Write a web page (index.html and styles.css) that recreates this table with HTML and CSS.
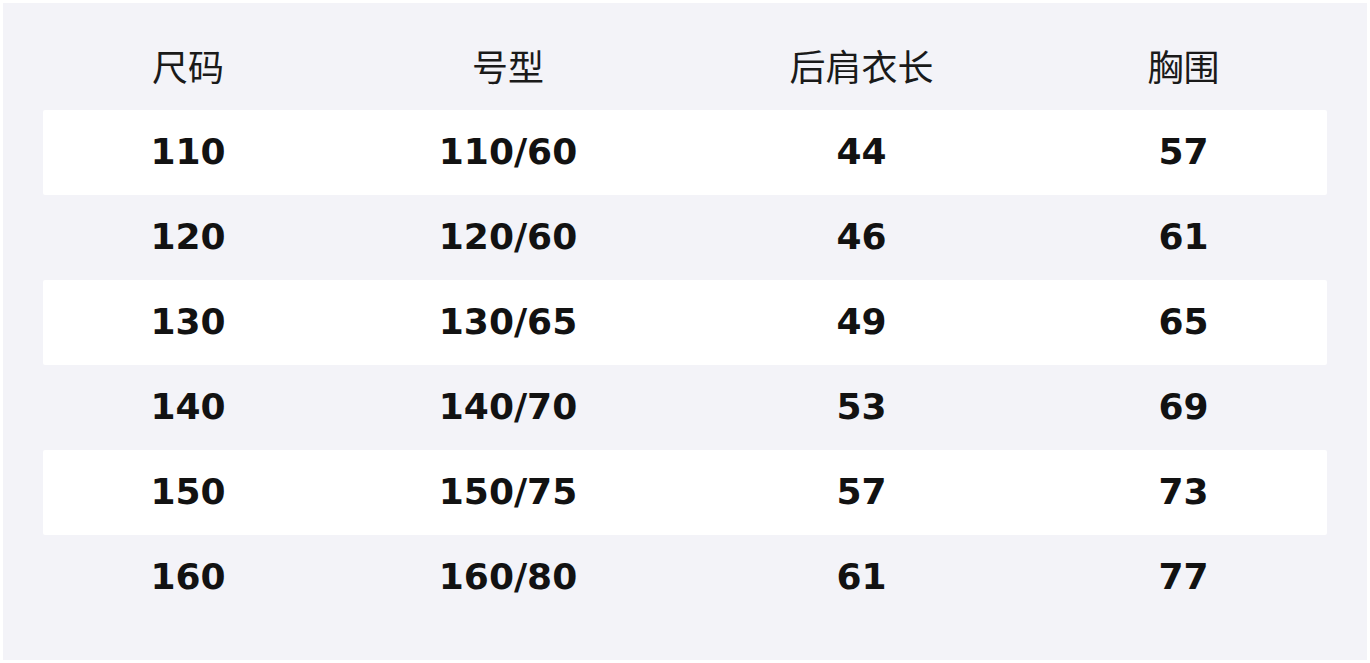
FILE: index.html
```html
<!DOCTYPE html>
<html lang="zh">
<head>
<meta charset="utf-8">
<link rel="stylesheet" href="styles.css">
</head>
<body>
<div class="panel">
  <div class="table">
    <div class="row head"><div>尺码</div><div>号型</div><div>后肩衣长</div><div>胸围</div></div>
    <div class="row odd"><div>110</div><div>110/60</div><div>44</div><div>57</div></div>
    <div class="row"><div>120</div><div>120/60</div><div>46</div><div>61</div></div>
    <div class="row odd"><div>130</div><div>130/65</div><div>49</div><div>65</div></div>
    <div class="row"><div>140</div><div>140/70</div><div>53</div><div>69</div></div>
    <div class="row odd"><div>150</div><div>150/75</div><div>57</div><div>73</div></div>
    <div class="row"><div>160</div><div>160/80</div><div>61</div><div>77</div></div>
  </div>
</div>
</body>
</html>
```
FILE: styles.css
```css
html, body {
  margin: 0;
  background: #ffffff;
}
body {
  padding: 3px;
}
.panel {
  width: 1364px;
  height: 657px;
  box-sizing: border-box;
  background: #f3f3f8;
  padding: 22px 40px 0 40px;
  font-family: "DejaVu Sans", "Noto Sans CJK SC", sans-serif;
  color: #121212;
}
.table {
  display: flex;
  flex-direction: column;
}
.row {
  display: grid;
  grid-template-columns: 290px 350px 357px 287px;
  height: 85px;
  align-items: center;
  text-align: center;
  font-weight: bold;
  font-size: 36px;
  padding-bottom: 2px;
  box-sizing: border-box;
  border-radius: 2px;
}
.row.head {
  font-weight: normal;
  font-size: 36px;
  font-family: "Noto Sans CJK SC", sans-serif;
  color: #1a1a1a;
  padding-bottom: 6px;
}
.row.odd {
  background: #ffffff;
}
```
